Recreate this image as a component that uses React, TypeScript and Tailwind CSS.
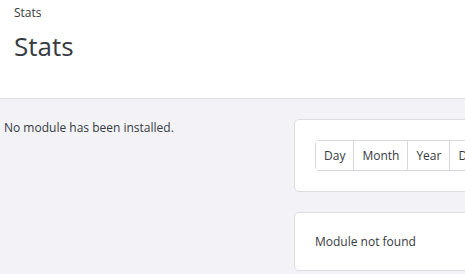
const ranges = ['Day', 'Month', 'Year', 'Day-1', 'Month-1', 'Year-1'];

export default function App() {
  return (
    <div className="w-[465px] h-[274px] overflow-hidden bg-[#f3f3f7] text-[#363a41] font-['Open_Sans',sans-serif]">
      <header className="h-[99px] bg-white border-b border-[#dfdfe5] px-[14px] pt-[4px]">
        <div className="text-[12px] leading-[18px]">Stats</div>
        <h1 className="mt-[6px] text-[26px] leading-[36px] font-normal">Stats</h1>
      </header>

      <div className="flex pt-[20px]">
        <div className="w-[294px] shrink-0 pl-[4px] text-[12px] leading-[18px]">
          No module has been installed.
        </div>

        <div className="flex flex-col gap-[20px] w-[320px] shrink-0">
          <div className="bg-white border border-[#dcdce4] rounded-[5px] px-[20px] py-[20px]">
            <div className="flex w-max border border-[#d6d6de] rounded-[4px] text-[12px]">
              {ranges.map((r, i) => (
                <button
                  key={r}
                  className={`h-[29px] px-[8px] bg-white ${i > 0 ? 'border-l border-[#d6d6de]' : ''}`}
                >
                  {r}
                </button>
              ))}
            </div>
          </div>

          <div className="bg-white border border-[#dcdce4] rounded-[5px] px-[20px] h-[59px] flex items-center text-[12px]">
            Module not found
          </div>
        </div>
      </div>
    </div>
  );
}
